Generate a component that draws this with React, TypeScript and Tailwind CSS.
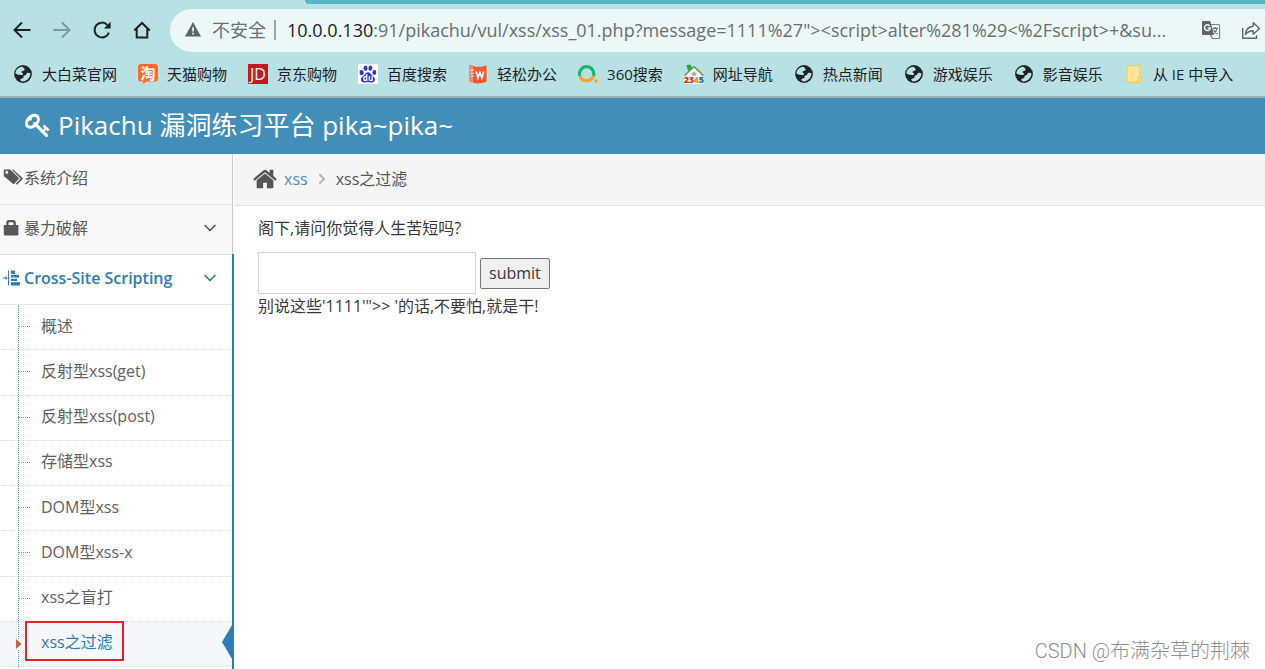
import React from "react";
import { ChevronDown, ChevronRight } from "lucide-react";

interface Bookmark {
  label: string;
  icon: React.ComponentType;
}

// Browser toolbar glyphs
function BackIcon({ className }: { className?: string }) {
  return (
    <svg viewBox="0 0 20 20" className={className} fill="none" stroke="currentColor" strokeWidth="2">
      <path d="M18.5 10H3M10 2.5 2.5 10l7.5 7.5" />
    </svg>
  );
}

function ReloadIcon() {
  return (
    <svg viewBox="0 0 20 20" className="size-5" fill="none" stroke="currentColor" strokeWidth="2">
      <path d="M16.9 12.6A7.4 7.4 0 1 1 15.4 5" />
      <path d="M18.6 1.8v6.7h-6.7z" fill="currentColor" stroke="none" />
    </svg>
  );
}

function HomeIcon() {
  return (
    <svg viewBox="0 0 20 20" className="size-5" fill="none" stroke="currentColor" strokeWidth="2">
      <path d="M2.2 10.4 10 3l7.8 7.4M4.7 9v8.5h10.6V9" />
    </svg>
  );
}

function WarningIcon() {
  return (
    <svg viewBox="0 0 16 15" className="h-[15px] w-4 shrink-0">
      <path d="M8 0l8 14.5H0z" fill="#5f6368" />
      <path d="M7.2 5.2h1.7v4.4H7.2zM7.2 10.8h1.7v1.7H7.2z" fill="#ecf8f8" />
    </svg>
  );
}

function TranslateIcon() {
  return (
    <svg viewBox="0 0 20 20" className="size-5">
      <path d="M9 4.5h8.6a1 1 0 0 1 1 1v12a1 1 0 0 1-1 1h-6.2L9 14" fill="none" stroke="#7b8285" strokeWidth="1.2" />
      <path d="M2 1h7.2l3.8 14H2a1 1 0 0 1-1-1V2a1 1 0 0 1 1-1z" fill="#5f6368" />
      <path d="M8.600 5.800A2.900 2.900 0 1 0 9.300 8H6.600" fill="none" stroke="#ecf8f8" strokeWidth="1.400" />
      <path d="M11.500 8.300h5.600M14.200 7v1.300M16 8.600c-.4 2.200-1.700 4-3.400 5M12.600 9.800c.8 2 2.200 3.400 4 4.200" fill="none" stroke="#6d7477" strokeWidth="1.200" />
    </svg>
  );
}

function ShareIcon() {
  return (
    <svg viewBox="0 0 20 20" className="size-5" fill="none" stroke="#5f6368" strokeWidth="1.4">
      <path d="M1.7 8v10.3h13.8v-3" />
      <path d="M12.2 2.8v3.4C7.3 6.6 4.9 9.6 4.4 14.6c2-2.7 4.2-3.8 7.8-3.9v3.5l6.3-5.8z" strokeLinejoin="round" />
    </svg>
  );
}

// Bookmark favicons
function GlobeIcon() {
  return (
    <svg viewBox="0 0 20 20" className="size-5">
      <circle cx="10" cy="10" r="8.9" fill="#202124" />
      <path d="M9.600 2.700c-4 0-7 3-7.200 6.700l2.800 1.400 3.400.1c1 .1 1.600-.6 1.500-1.500L8.700 8.500c-.5-.8.1-1.500.9-1.600 1.500-.1 2.200-.8 2-2z" fill="#b8e1e4" />
      <path d="M17.400 9.300c-.9-.5-2.400-.9-3.300-.2-1 .8-.6 1.900-1.900 2.200-1 .2-1.900.4-1.700 1.400.2 1.200-.5 1.600-1.600 1.800-1.100.1-1.800.7-1.700 1.500l1.600 1.400c4.600.4 8.600-3.200 8.600-8.100z" fill="#b8e1e4" />
    </svg>
  );
}

function TaobaoIcon() {
  return (
    <svg viewBox="0 0 20 20" className="size-5">
      <path d="M3 0h14a3 3 0 0 1 3 3v11.500a3 3 0 0 1-3 3H8.600L5 20v-2.500H3a3 3 0 0 1-3-3V3a3 3 0 0 1 3-3z" fill="#ff6a2b" />
      <text x="10" y="14.500" textAnchor="middle" fontSize="15" fontWeight="700" fill="#fff">淘</text>
    </svg>
  );
}

function JdIcon() {
  return (
    <svg viewBox="0 0 20 20" className="size-5">
      <path d="M0 0h20v20H0z" fill="#c91623" />
      <text x="10" y="15.500" textAnchor="middle" fontSize="16" fill="#fff">JD</text>
    </svg>
  );
}

function BaiduIcon() {
  return (
    <svg viewBox="0 0 20 20" className="size-5">
      <rect width="20" height="20" rx="1.500" fill="#fff" />
      <g fill="#2932e1">
        <ellipse cx="3.600" cy="8.600" rx="2" ry="2.600" transform="rotate(-12 3.6 8.6)" />
        <ellipse cx="7.500" cy="4.200" rx="1.900" ry="2.600" />
        <ellipse cx="12.400" cy="4.200" rx="1.900" ry="2.600" transform="rotate(8 12.4 4.2)" />
        <ellipse cx="16.300" cy="8.400" rx="1.900" ry="2.500" transform="rotate(10 16.3 8.4)" />
        <path d="M10 8.200c1.900 0 2.600 1.500 3.700 2.700 1.300 1.300 3.500 2.600 3.300 4.900-.2 2-1.700 2.800-3.500 2.600-2.400-.3-4.600-.3-7 0-1.800.2-3.400-.6-3.500-2.600-.2-2.300 2-3.600 3.300-4.900C7.400 9.700 8.100 8.200 10 8.200z" />
      </g>
      <text x="10" y="16.800" textAnchor="middle" fontSize="8" fontWeight="700" fill="#fff">du</text>
    </svg>
  );
}

function WpsIcon() {
  return (
    <svg viewBox="0 0 20 20" className="size-5">
      <path d="M1 .5l6 1.500v17l-6-1z" fill="#f98b6c" />
      <path d="M5 2.200c4.500 1.100 8.500.7 13.500-1v16.600C13.500 19.400 9.500 20 5 19z" fill="#f9562c" />
      <path d="M2.800 6.200h3M2.800 9.200h3M2.800 12.200h3" stroke="#fff" strokeWidth="1" />
      <path d="M8.200 7.500l1.700 6.500 2-5.500 2 5.500 1.800-6.500" fill="none" stroke="#fff" strokeWidth="1.600" />
    </svg>
  );
}

function SearchRingIcon() {
  return (
    <svg viewBox="0 0 20 20" className="size-5" fill="none" strokeWidth="3.200">
      <path d="M1.900 12A7.100 7.100 0 1 1 15.400 12" stroke="#19b36b" />
      <path d="M1.900 11.700A7.100 7.100 0 0 0 15.400 11.700" stroke="#f8a12c" />
      <circle cx="18" cy="17" r="1.700" fill="#f8a12c" stroke="none" />
    </svg>
  );
}

function HouseIcon() {
  return (
    <svg viewBox="0 0 20 20" className="size-5 overflow-visible">
      <path d="M3.500 9 10 3l6.500 6v4h-13zM0 12.500h20V20H0z" fill="#f4faf6" />
      <path d="M.5 11.500 10 2.800l9.500 8.700" fill="none" stroke="#6f8f57" strokeWidth="1.500" />
      <path d="M2.500 1l3.800-.6L8 3.600 4 7.300z" fill="#2fa32b" />
      <path d="M7.800 9.500 10 7.500l2.300 2v2H7.800z" fill="#97b884" />
      <g fontSize="9" fontWeight="800" textAnchor="middle">
        <text x="2.500" y="19.200" fill="#e52b20">2</text>
        <text x="7.500" y="19.200" fill="#d6312b">3</text>
        <text x="12.500" y="19.200" fill="#f19a1f">4</text>
        <text x="17.500" y="19.200" fill="#1769c5">5</text>
      </g>
    </svg>
  );
}

function FolderIcon() {
  return (
    <svg viewBox="0 0 20 20" className="size-5">
      <path d="M3 1.500h13v12h1v4l-2 1H3z" fill="#ffe391" stroke="#f2cd52" strokeWidth="1" />
      <path d="M14 18.500v-5h2.500" fill="none" stroke="#edc44b" strokeWidth="1" />
    </svg>
  );
}

// Page icons
function KeyIcon() {
  return (
    <svg viewBox="0 0 1792 1792" className="size-[26px]" fill="currentColor">
      <path d="M832 512q0-80-56-136t-136-56-136 56-56 136q0 42 19 83-41-19-83-19-80 0-136 56t-56 136 56 136 136 56 136-56 56-136q0-42-19-83 41 19 83 19 80 0 136-56t56-136zm851 704q0 17-49 66t-66 49q-9 0-28.500-16t-36.500-33-38.500-40-24.500-26l-96 96 220 220q28 28 28 68 0 42-39 81t-81 39q-40 0-68-28l-671-671q-176 131-365 131-163 0-265.500-102.500t-102.500-265.500q0-160 95-313t248-248 313-95q163 0 265.500 102.500t102.500 265.500q0 189-131 365l355 355 96-96q-3-3-26-24.500t-40-38.500-33-36.500-16-28.500q0-17 49-66t66-49q13 0 23 10 6 6 46 44.500t82 79.500 86.500 86 73 78 28.500 41z" />
    </svg>
  );
}

function TagsIcon() {
  return (
    <svg viewBox="0 0 20 20" className="size-5" fill="currentColor">
      <path d="M.8 1.500h6.400l9 8.700-5.500 6.300L.8 7.900zM3.800 3a1.400 1.400 0 1 0 0 2.800 1.400 1.400 0 0 0 0-2.800z" fillRule="evenodd" />
      <path d="M8.700 1.500h1.500L20 10.400l-5.900 6.300-1.400-1 4.900-5.300z" />
    </svg>
  );
}

function LockIcon() {
  return (
    <svg viewBox="0 0 20 20" className="size-5" fill="currentColor">
      <path d="M.8 7h2.500V4.800A2.800 2.800 0 0 1 6 2h4a2.800 2.800 0 0 1 2.800 2.800V7h2.600v9.500a1 1 0 0 1-1 1H1.800a1 1 0 0 1-1-1zM5.500 7h5V5.200a1 1 0 0 0-1-1h-3a1 1 0 0 0-1 1z" fillRule="evenodd" />
    </svg>
  );
}

function IndentIcon() {
  return (
    <svg viewBox="0 0 20 20" className="size-5" fill="currentColor">
      <path d="M0 9.500h2.500V8L4.600 10l-2.100 2v-1.500H0zM5 2.500h1v15H5zM8 2.500h4V6H8zM8 7h8v2.500H8zM8 10.700h6v2.300H8zM8 14.300h9v3.200H8z" />
    </svg>
  );
}

function BreadcrumbHomeIcon() {
  return (
    <svg viewBox="0 0 1792 1792" className="size-[26px]" fill="currentColor">
      <path d="M1472 992v480q0 26-19 45t-45 19h-384v-384h-256v384h-384q-26 0-45-19t-19-45v-480q0-1 .5-3t.5-3l575-474 575 474q1 2 1 6zm223-69l-62 74q-8 9-21 11h-3q-13 0-21-7l-692-577-692 577q-12 8-24 7-13-2-21-11l-62-74q-8-10-7-23.500t11-21.500l719-599q32-26 76-26t76 26l244 204v-195q0-14 9-23t23-9h192q14 0 23 9t9 23v408l219 182q10 8 11 21.500t-7 23.500z" />
    </svg>
  );
}

const bookmarks: Bookmark[] = [
  { label: "大白菜官网", icon: GlobeIcon },
  { label: "天猫购物", icon: TaobaoIcon },
  { label: "京东购物", icon: JdIcon },
  { label: "百度搜索", icon: BaiduIcon },
  { label: "轻松办公", icon: WpsIcon },
  { label: "360搜索", icon: SearchRingIcon },
  { label: "网址导航", icon: HouseIcon },
  { label: "热点新闻", icon: GlobeIcon },
  { label: "游戏娱乐", icon: GlobeIcon },
  { label: "影音娱乐", icon: GlobeIcon },
  { label: "从 IE 中导入", icon: FolderIcon },
];

const xssItems = [
  "概述",
  "反射型xss(get)",
  "反射型xss(post)",
  "存储型xss",
  "DOM型xss",
  "DOM型xss-x",
  "xss之盲打",
  "xss之过滤",
];

function BrowserBar() {
  return (
    <div className="relative border-b-2 border-[#98b4b8] bg-[#b8e1e4] pt-[9px] text-[#202124]">
      {/* Tab strip edge */}
      <div className="absolute top-0 right-0 left-[305px] h-1 rounded-bl-full bg-[#58b8c2]" />
      <div className="flex items-center pl-3">
        <div className="flex shrink-0 gap-5 pb-0.5">
          <button aria-label="后退"><BackIcon className="size-5" /></button>
          <button aria-label="前进" className="text-[#7d9a9e]"><BackIcon className="size-5 rotate-180" /></button>
          <button aria-label="重新加载"><ReloadIcon /></button>
          <button aria-label="主页"><HomeIcon /></button>
        </div>
        <div className="ml-[18px] flex h-[43px] min-w-0 flex-1 items-center rounded-l-full bg-[#ecf8f8] pr-1 pb-0.5 pl-[15px] text-lg text-[#6a6e70]">
          <WarningIcon />
          <span className="ml-[11px] shrink-0">不安全</span>
          <span className="mx-2 h-5 w-0.5 shrink-0 bg-[#9aa3a5]" />
          <label htmlFor="address" className="ml-[3px] shrink-0 text-[#202124]">10.0.0.130</label>
          <input
            id="address"
            className="min-w-0 flex-1 bg-transparent outline-none"
            defaultValue={':91/pikachu/vul/xss/xss_01.php?message=1111%27"><script>alter%281%29<%2Fscript>+&su...'}
          />
          <div className="ml-2 flex shrink-0 gap-5">
            <button aria-label="翻译此页"><TranslateIcon /></button>
            <button aria-label="分享"><ShareIcon /></button>
          </div>
        </div>
      </div>
      <nav className="flex h-11 items-center gap-[21px] overflow-hidden pl-[13px] text-[15px]">
        {bookmarks.map(({ label, icon: Icon }) => (
          <a key={label} href="#" className="flex shrink-0 items-center gap-[9px]">
            <Icon />
            {label}
          </a>
        ))}
      </nav>
    </div>
  );
}

function Sidebar() {
  return (
    <aside className="flex w-[234px] shrink-0 flex-col text-[#585858]">
      <div className="mr-px border-r border-[#ccc] bg-[#f8f8f8]">
        <a href="#" className="flex h-[50px] items-center gap-px pb-[3px] pl-[3px]">
          <TagsIcon />
          系统介绍
        </a>
        <a href="#" className="flex h-[50px] items-center gap-px border-t border-[#e5e5e5] pr-3 pb-[3px] pl-[3px]">
          <LockIcon />
          <span className="flex-1">暴力破解</span>
          <ChevronDown className="size-5" strokeWidth={2} />
        </a>
      </div>
      <div className="flex-1 border-r-2 border-[#2b7dbc]">
        <a href="#" className="flex h-[51px] items-center gap-px border-y border-[#e5e5e5] pr-3 pb-[3px] pl-[3px] font-semibold text-[#2b7dbc]">
          <IndentIcon />
          <span className="flex-1">Cross-Site Scripting</span>
          <ChevronDown className="size-5" strokeWidth={2} />
        </a>
        <div className="relative">
          <ul className="grid h-[362px] auto-rows-fr">
            {xssItems.map((item) => {
              const active = item === "xss之过滤";
              return (
                <li
                  key={item}
                  className={`relative flex items-center border-b border-dotted border-[#dcdcdc] pb-[3px] pl-[41px] ${active ? "bg-[#f5f7fa]" : ""}`}
                >
                  {!active && <span className="absolute top-[21px] left-[18px] w-3 border-t border-dotted border-[#5a9dcd]" />}
                  <a href="#" className={active ? "text-[#2b7dbc]" : "text-[#616161]"}>{item}</a>
                  {active && (
                    <>
                      <svg viewBox="0 0 6 10" className="absolute top-[17px] left-4 z-10 h-[10px] w-[6px] bg-[#f5f7fa]">
                        <path d="M0 0l5.500 5L0 10z" fill="#c86139" />
                      </svg>
                      <svg viewBox="0 0 10 34" className="absolute top-[3px] right-0 h-[34px] w-[10px]">
                        <path d="M10 0v34L0 17z" fill="#2b7dbc" />
                      </svg>
                      <span className="absolute -top-px left-[25px] h-10 w-[99px] border-2 border-[#e8212b]" />
                    </>
                  )}
                </li>
              );
            })}
          </ul>
          <span className="absolute inset-y-0 left-[18px] border-l border-dotted border-[#5a9dcd]" />
        </div>
      </div>
    </aside>
  );
}

export default function App() {
  return (
    <div className="relative flex min-h-screen flex-col bg-white font-['Open_Sans','Noto_Sans_CJK_SC',sans-serif] text-base text-[#393939]">
      <BrowserBar />
      <header className="flex h-14 items-center bg-[#438eb9] pb-0.5 pl-[25px] text-white">
        <a href="#" className="flex items-center gap-[7px] text-[26px]">
          <KeyIcon />
          Pikachu 漏洞练习平台 pika~pika~
        </a>
      </header>
      <div className="flex flex-1">
        <Sidebar />
        <main className="min-w-0 flex-1">
          <nav className="flex h-[52px] items-center border-b border-[#e5e5e5] bg-[#f5f5f5] pb-0.5 pl-[18px] text-[#555]">
            <BreadcrumbHomeIcon />
            <a href="#" className="ml-1.5 text-[#4c8fbd]">xss</a>
            <ChevronRight className="mx-1.5 size-4 text-[#b2b6bf]" strokeWidth={3} />
            <span>xss之过滤</span>
          </nav>
          <form className="px-6 pt-2.5" onSubmit={(e) => e.preventDefault()}>
            <label htmlFor="message" className="block">阁下,请问你觉得人生苦短吗?</label>
            <div className="mt-3 flex items-center gap-1">
              <input id="message" type="text" className="h-[42px] w-[218px] border border-[#d5d5d5] bg-white px-1 outline-none" />
              <button type="submit" className="h-[31px] rounded-xs border border-[#767676] bg-[#efefef] px-2">submit</button>
            </div>
            <p>别说这些'1111'"&gt;&gt; '的话,不要怕,就是干!</p>
          </form>
        </main>
      </div>
      <span className="absolute right-[15px] bottom-1 font-['Roboto','Noto_Sans_CJK_SC',sans-serif] text-xl font-light text-[#8f8f8f]">
        CSDN @布满杂草的荆棘
      </span>
    </div>
  );
}
